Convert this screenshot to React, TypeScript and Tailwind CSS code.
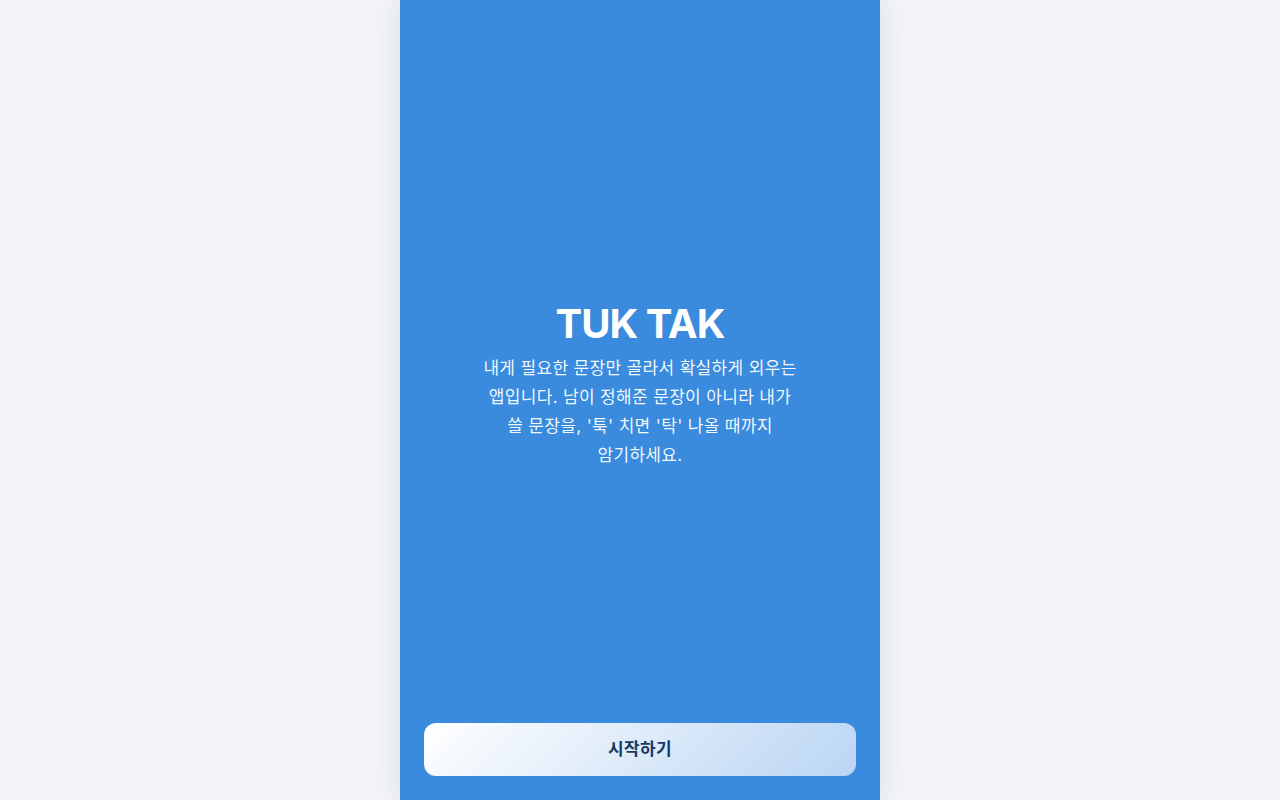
import React from 'react';

export default function App() {
  return (
    <div
      className="min-h-screen w-full bg-[#f3f5f8] flex justify-center"
      style={{ fontFamily: "Inter, 'Noto Sans CJK KR', sans-serif" }}
    >
      <div className="w-[480px] h-screen bg-[#3a8bde] flex flex-col shadow-[0_0_32px_rgba(15,30,60,0.12)]">
        {/* Intro */}
        <main className="flex-1 flex flex-col items-center pt-[300px]">
          <h1 className="text-[40px] leading-[48px] font-bold text-white tracking-tight">TUK TAK</h1>
          <p className="mt-[6px] max-w-[320px] text-center text-[17px] tracking-[0.02em] leading-[29px] text-white/95 break-keep">
            내게 필요한 문장만 골라서 확실하게 외우는 앱입니다. 남이 정해준 문장이 아니라 내가 쓸 문장을, '툭' 치면 '탁' 나올 때까지
            암기하세요.
          </p>
        </main>

        {/* Start */}
        <div className="px-6 pb-6">
          <button className="w-full h-[53px] rounded-xl bg-[linear-gradient(135deg,#ffffff,#bad5f3)] text-[#173a66] font-semibold text-[17px] tracking-[0.02em]">
            시작하기
          </button>
        </div>
      </div>
    </div>
  );
}
